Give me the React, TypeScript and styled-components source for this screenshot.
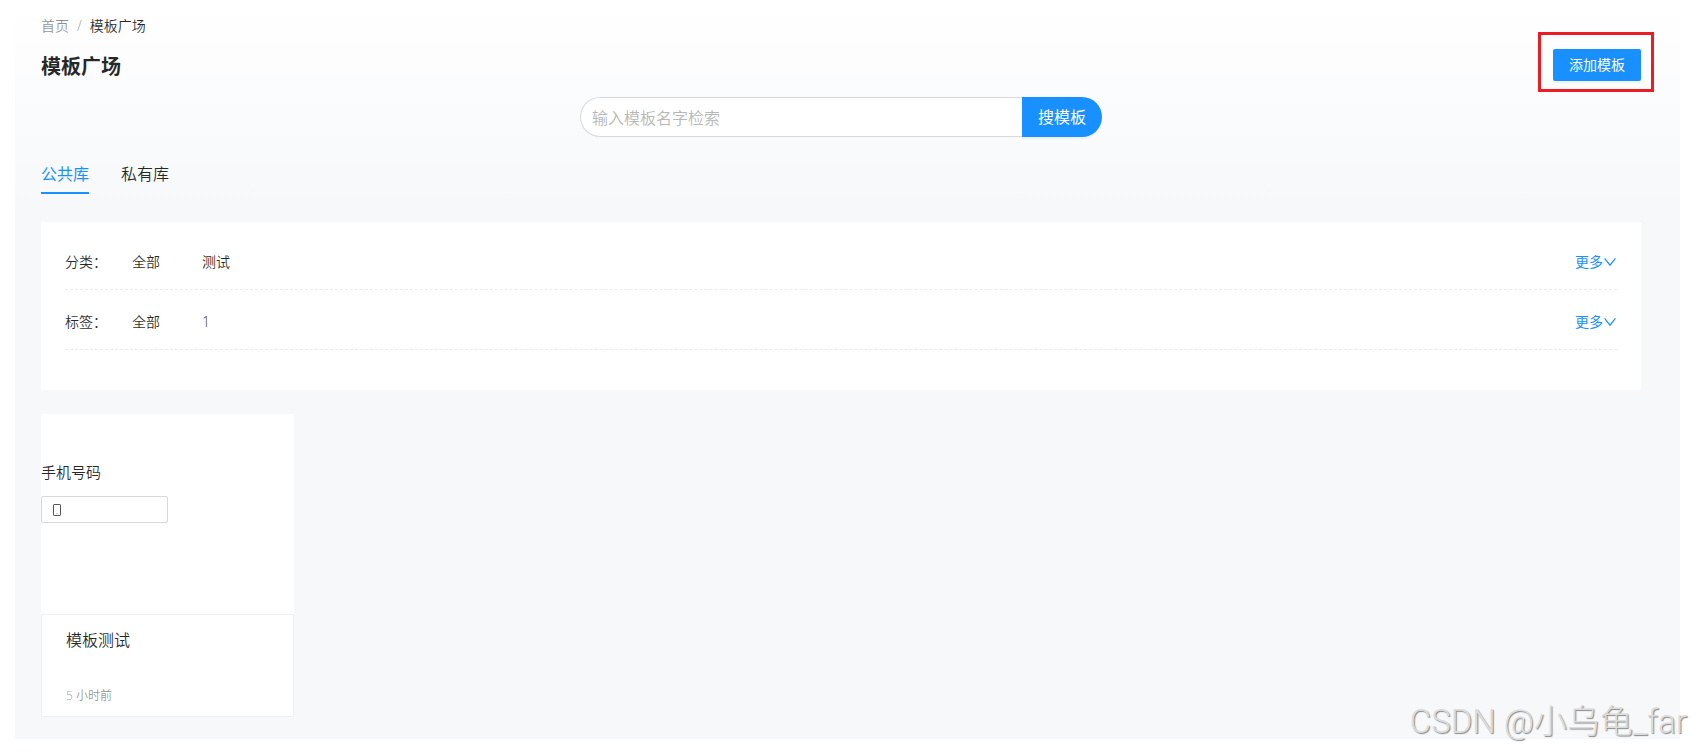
import React, { useState } from 'react';
import styled, { createGlobalStyle } from 'styled-components';

const GlobalStyle = createGlobalStyle`
  *, *::before, *::after { box-sizing: border-box; }
  body {
    margin: 0;
    background: #fff;
    color: rgba(0, 0, 0, 0.85);
    font-family: "Open Sans", "Noto Sans CJK SC", sans-serif;
    font-size: 14px;
    font-weight: 350;
    line-height: 22px;
  }
  button, input { font: inherit; }
`;

const Page = styled.div`
  position: relative;
  padding: 0 11px 14px 15px;
`;

const Main = styled.main`
  padding: 15px 39px 22px 26px;
  background: linear-gradient(#fff, #f6f8fa 28%);
`;

const Breadcrumb = styled.nav`
  display: flex;
  gap: 8px;
  color: rgba(0, 0, 0, 0.45);
`;

const BreadcrumbLink = styled.a`
  color: inherit;
  text-decoration: none;
`;

const BreadcrumbCurrent = styled.span`
  color: rgba(0, 0, 0, 0.85);
`;

const TitleRow = styled.header`
  display: flex;
  align-items: center;
  justify-content: space-between;
  margin-top: 12px;
`;

const Title = styled.h1`
  margin: 0;
  padding-top: 4px;
  font-size: 20px;
  font-weight: 700;
  line-height: 28px;
`;

const Highlight = styled.div`
  position: relative;

  &::after {
    content: "";
    position: absolute;
    inset: -17px -13px -11px -15px;
    border: 3px solid #ed1c24;
    pointer-events: none;
  }
`;

const PrimaryButton = styled.button<{ $search?: boolean }>`
  display: block;
  height: ${p => (p.$search ? 40 : 32)}px;
  padding: 0 16px;
  border: 0;
  border-radius: ${p => (p.$search ? '0 20px 20px 0' : '2px')};
  background: #1890ff;
  box-shadow: 0 2px 0 rgba(0, 0, 0, 0.04);
  color: #fff;
  font-size: ${p => (p.$search ? 16 : 14)}px;
  font-weight: 400;
  white-space: nowrap;
  cursor: pointer;
`;

const SearchForm = styled.form`
  display: flex;
  width: 100%;
  max-width: 522px;
  margin: 16px auto 0;
`;

const SearchInput = styled.input`
  flex: 1;
  min-width: 0;
  height: 40px;
  padding: 2px 11px 0;
  border: 1px solid #d9d9d9;
  border-right: 0;
  border-radius: 20px 0 0 20px;
  background: #fff;
  font-size: 16px;
  outline: none;

  &::placeholder { color: #b8b8b8; }
`;

const Tabs = styled.div`
  display: flex;
  gap: 32px;
  margin-top: 24px;
`;

const Tab = styled.button<{ $active: boolean }>`
  padding: 0 0 5px;
  border: 0;
  border-bottom: 2px solid ${p => (p.$active ? '#1890ff' : 'transparent')};
  background: none;
  color: ${p => (p.$active ? '#1890ff' : 'rgba(0, 0, 0, 0.85)')};
  font-size: 16px;
  font-weight: ${p => (p.$active ? 400 : 350)};
  line-height: 26px;
  cursor: pointer;
`;

const FilterPanel = styled.section`
  display: flex;
  flex-direction: column;
  gap: 16px;
  margin-top: 28px;
  padding: 24px 24px 40px;
  border-radius: 2px;
  background: #fff;
`;

const FilterRow = styled.div`
  display: flex;
  align-items: center;
  padding-bottom: 11px;
  border-bottom: 1px dashed #ebebeb;
  line-height: 32px;
`;

const FilterName = styled.span`
  width: 67px;
`;

const FilterOptions = styled.div`
  display: flex;
  flex: 1;
  gap: 42px;
`;

const FilterOption = styled.button`
  padding: 0;
  border: 0;
  background: none;
  color: inherit;
  line-height: 32px;
  cursor: pointer;
`;

const MoreLink = styled.a`
  display: flex;
  align-items: center;
  color: #1890ff;
  font-weight: 400;
  text-decoration: none;
`;

const CardGrid = styled.section`
  display: grid;
  grid-template-columns: repeat(6, 1fr);
  gap: 16px;
  margin-top: 24px;
`;

const Card = styled.article`
  background: #fff;
`;

const CardCover = styled.div`
  height: 200px;
  padding-top: 46px;
`;

const PreviewLabel = styled.label`
  display: block;
  font-size: 15px;
  line-height: 24px;
`;

const PreviewField = styled.div`
  display: flex;
  align-items: center;
  width: 50%;
  height: 27px;
  margin-top: 12px;
  padding: 0 8px;
  border: 1px solid #d9d9d9;
  border-radius: 2px;
`;

const PreviewInput = styled.input`
  width: 100%;
  min-width: 0;
  padding: 0;
  border: 0;
  background: none;
  outline: none;
`;

const CardBody = styled.div`
  padding: 12px 24px 10px;
  border: 1px solid #f0f0f0;
`;

const CardTitle = styled.h2`
  margin: 0;
  font-size: 16px;
  font-weight: 350;
  line-height: 26px;
`;

const CardTime = styled.time`
  display: block;
  margin-top: 33px;
  color: rgba(0, 0, 0, 0.45);
  font-size: 12px;
  line-height: 20px;
`;

const Watermark = styled.div`
  position: absolute;
  right: 4px;
  bottom: 9px;
  color: #dcdcdc;
  font-family: Roboto, "Noto Sans CJK SC", sans-serif;
  font-size: 33px;
  font-weight: 300;
  line-height: 44px;
  text-shadow: 1px 1px 1px #888;
  white-space: nowrap;
  pointer-events: none;
`;

const ChevronIcon = () => (
  <svg width="14" height="14" viewBox="0 0 14 14" fill="none" stroke="currentColor" strokeWidth="1.2" aria-hidden="true">
    <path d="M1.6 3.4 7 10.2 12.4 3.4" />
  </svg>
);

const PhoneGlyph = styled.svg`
  flex-shrink: 0;
`;

const PhoneIcon = () => (
  <PhoneGlyph width="14" height="14" viewBox="0 0 14 14" fill="none" stroke="#555" aria-hidden="true">
    <rect x="3.5" y="1.5" width="7" height="11" rx="0.6" />
    <circle cx="7" cy="10.6" r="0.5" fill="#777" stroke="none" />
  </PhoneGlyph>
);

const tabs = ['公共库', '私有库'];

const filters = [
  { name: '分类：', options: ['全部', '测试'] },
  { name: '标签：', options: ['全部', '1'] },
];

export default function App() {
  const [active, setActive] = useState(tabs[0]);

  return (
    <>
      <GlobalStyle />
      <Page lang="zh-CN">
        <Main>
          <Breadcrumb>
            <BreadcrumbLink href="#">首页</BreadcrumbLink>
            <span>/</span>
            <BreadcrumbCurrent>模板广场</BreadcrumbCurrent>
          </Breadcrumb>
          <TitleRow>
            <Title>模板广场</Title>
            <Highlight>
              <PrimaryButton type="button">添加模板</PrimaryButton>
            </Highlight>
          </TitleRow>
          <SearchForm role="search" onSubmit={e => e.preventDefault()}>
            <SearchInput type="text" aria-label="搜模板" placeholder="输入模板名字检索" />
            <PrimaryButton $search type="submit">搜模板</PrimaryButton>
          </SearchForm>
          <Tabs role="tablist">
            {tabs.map(tab => (
              <Tab
                key={tab}
                type="button"
                role="tab"
                aria-selected={tab === active}
                $active={tab === active}
                onClick={() => setActive(tab)}
              >
                {tab}
              </Tab>
            ))}
          </Tabs>
          <FilterPanel>
            {filters.map(filter => (
              <FilterRow key={filter.name}>
                <FilterName>{filter.name}</FilterName>
                <FilterOptions>
                  {filter.options.map(option => (
                    <FilterOption key={option} type="button">{option}</FilterOption>
                  ))}
                </FilterOptions>
                <MoreLink href="#">更多<ChevronIcon /></MoreLink>
              </FilterRow>
            ))}
          </FilterPanel>
          <CardGrid>
            <Card>
              <CardCover>
                <PreviewLabel htmlFor="phone">手机号码</PreviewLabel>
                <PreviewField>
                  <PhoneIcon />
                  <PreviewInput id="phone" type="tel" />
                </PreviewField>
              </CardCover>
              <CardBody>
                <CardTitle>模板测试</CardTitle>
                <CardTime>5 小时前</CardTime>
              </CardBody>
            </Card>
          </CardGrid>
        </Main>
        <Watermark>CSDN @小乌龟_far</Watermark>
      </Page>
    </>
  );
}
